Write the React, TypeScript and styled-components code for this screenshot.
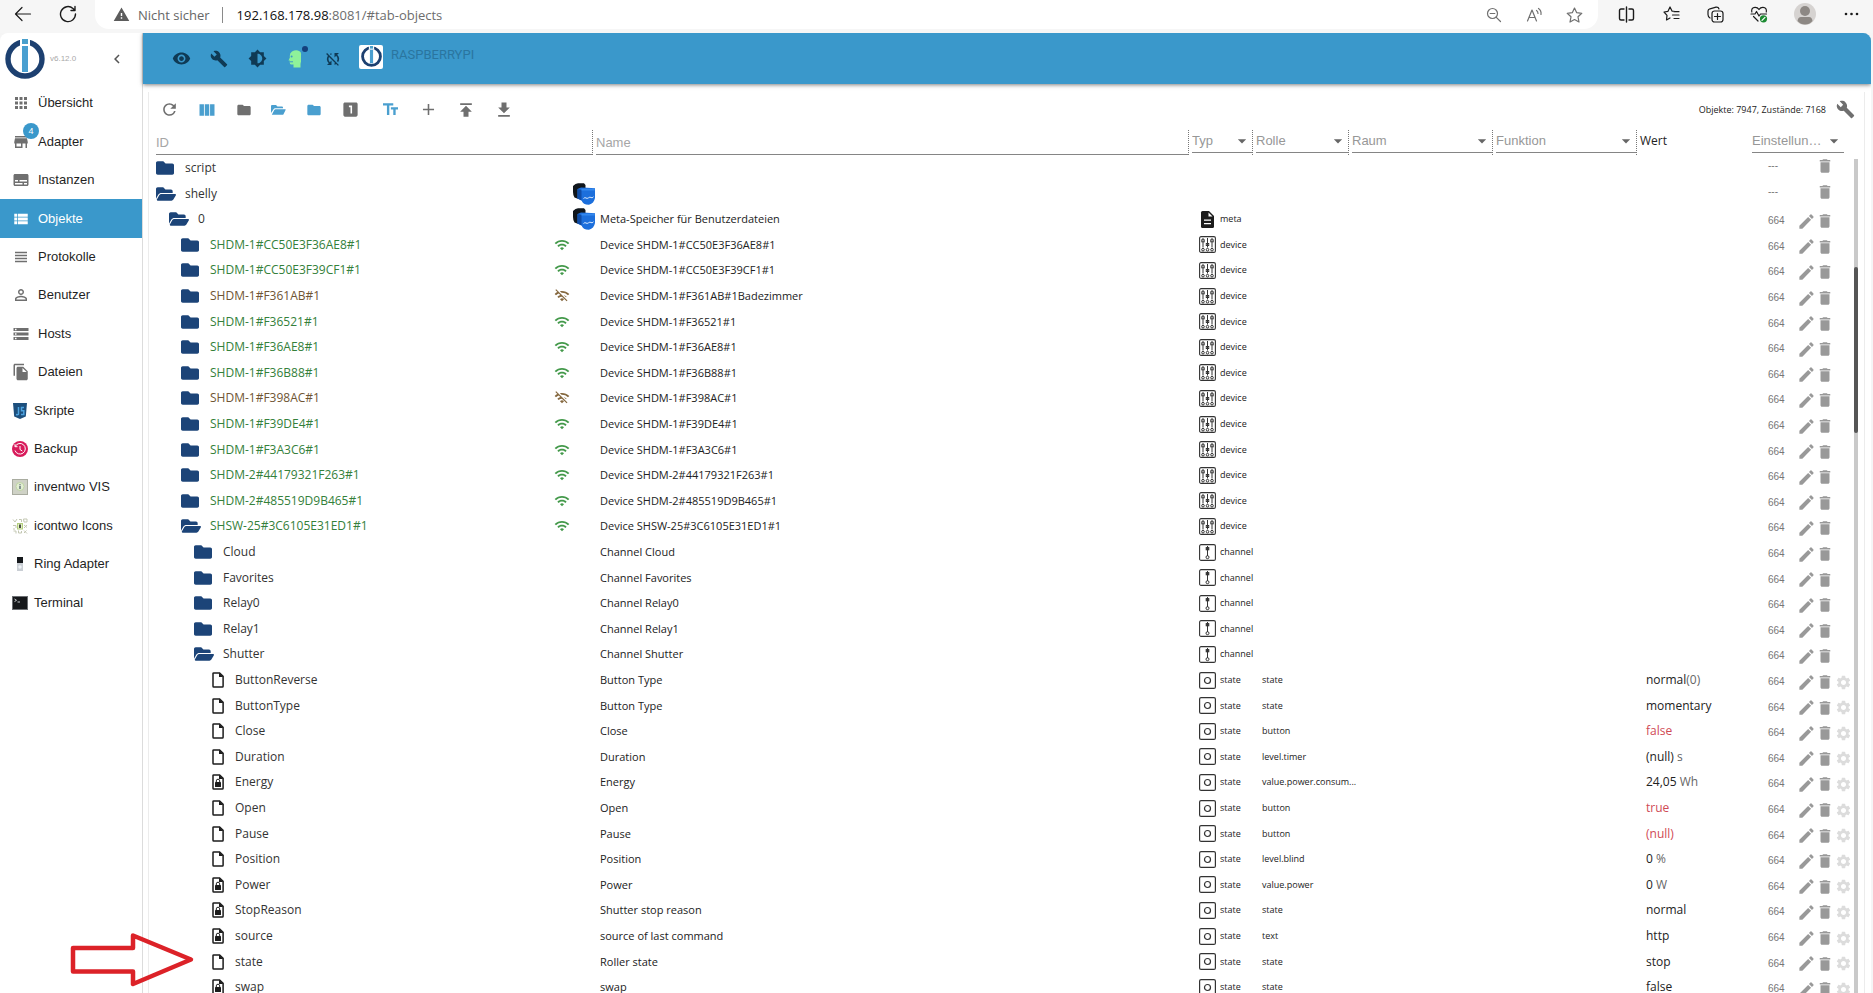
import React from 'react';
import styled, { createGlobalStyle } from 'styled-components';
import { FaFolder, FaFolderOpen } from 'react-icons/fa';
import {
  MdAdd, MdApps, MdArrowDropDown, MdBrightness6, MdBuild, MdChevronLeft, MdDelete, MdEdit, MdFileCopy,
  MdFolder, MdGetApp, MdLooksOne, MdPermIdentity, MdPublish, MdRefresh, MdSettings, MdStorage, MdStore,
  MdSubtitles, MdSyncDisabled, MdTextFields, MdViewColumn, MdViewHeadline, MdViewList, MdVisibility,
  MdWarning, MdWifi, MdWifiOff,
} from 'react-icons/md';

const ui = '"Open Sans", "Noto Sans", sans-serif';
const sans = '"Liberation Sans", Arial, sans-serif';
const blue = '#3a98cb';
const navy = '#1c4478';
const grey = '#6f6f6f';

const GlobalStyle = createGlobalStyle`
  *, *::before, *::after { box-sizing: border-box; }
  body { margin: 0; background: #f5f5f5; color: #222; font-family: ${ui}; }
  button, input, select { font: inherit; color: inherit; margin: 0; padding: 0; border: 0; background: none; border-radius: 0; outline: 0; }
  svg { display: block; flex: none; }
`;

const Page = styled.div`
  position: relative;
  display: flex;
  flex-direction: column;
  height: 100vh;
  overflow: hidden;
`;

/* Browser bar */
const BrowserBar = styled.header`
  display: flex;
  flex: none;
  height: 33px;
  padding: 0 5px 5px 5px;
  background: #f6f6f6;
`;
const BrowserButton = styled.button<{ $w: number; $soft?: boolean }>`
  display: flex;
  align-items: center;
  justify-content: center;
  width: ${p => p.$w}px;
  color: ${p => (p.$soft ? '#707070' : '#1b1b1b')};
`;
const AddressBox = styled.div`
  display: flex;
  flex: 1;
  align-items: center;
  height: 29px;
  padding: 0 4px 0 18px;
  background: #fff;
  border-radius: 0 0 14px 14px;
`;
const Insecure = styled.span`
  padding: 0 12px 0 8px;
  color: #666;
  font-size: 13px;
  line-height: 16px;
`;
const Divider = styled.span`
  width: 1px;
  height: 16px;
  background: #8a8a8a;
`;
const Url = styled.span`
  flex: 1;
  padding-left: 14px;
  color: #6d6d6d;
  font-size: 13px;
  line-height: 16px;
  b { font-weight: 400; color: #111; }
`;

/* Shell */
const Shell = styled.div`
  display: flex;
  flex: 1;
  min-height: 0;
  margin-right: 2px;
  background: #fff;
  border-radius: 8px 8px 0 0;
  overflow: hidden;
`;
const Sidebar = styled.nav`
  flex: none;
  width: 143px;
  border-right: 1px solid #dcdcdc;
`;
const Brand = styled.div`
  display: flex;
  align-items: center;
  height: 51px;
  padding: 0 16px 0 5px;
`;
const Version = styled.span`
  flex: 1;
  padding-left: 5px;
  color: #a9a9a9;
  font: 8px/12px ${sans};
`;
const Collapse = styled.button`
  color: #555;
`;
const Menu = styled.ul`
  margin: 0;
  padding: 0;
  list-style: none;
`;
const MenuItem = styled.li`
  height: 38px;
  &:nth-child(5n + 2), &:nth-child(5n + 4) { height: 39px; }
`;
const MenuLink = styled.a<{ $active?: boolean; $picture?: boolean }>`
  position: relative;
  display: flex;
  align-items: center;
  gap: ${p => (p.$picture ? 6 : 8)}px;
  height: 100%;
  padding-left: 12px;
  color: ${p => (p.$active ? '#fff' : '#1f1f1f')};
  background: ${p => (p.$active ? blue : 'transparent')};
  font: 13px/18px ${sans};
  text-decoration: none;
  svg { color: ${p => (p.$active ? '#fff' : grey)}; }
`;
const CountBadge = styled.span`
  position: absolute;
  left: 23px;
  top: 1px;
  width: 16px;
  height: 16px;
  border-radius: 50%;
  background: ${blue};
  color: #fff;
  font: 9px/16px ${sans};
  text-align: center;
`;

const Main = styled.main`
  display: flex;
  flex: 1;
  flex-direction: column;
  min-width: 0;
`;
const AppBar = styled.div`
  display: flex;
  flex: none;
  align-items: center;
  height: 51px;
  padding-left: 19px;
  background: ${blue};
  box-shadow: 0 1px 4px rgba(0, 0, 0, 0.5);
  color: #0f3a55;
`;
const BarButton = styled.button`
  position: relative;
  display: flex;
  align-items: center;
  justify-content: center;
  width: 38px;
  height: 38px;
`;
const Dot = styled.span`
  position: absolute;
  right: 6px;
  top: 6px;
  width: 6px;
  height: 6px;
  border-radius: 50%;
  background: #14407c;
`;
const HostLogo = styled.span`
  display: flex;
  align-items: center;
  justify-content: center;
  width: 24px;
  height: 24px;
  margin: 0 8px 4px 7px;
  border-radius: 2px;
  background: #fff;
`;
const HostName = styled.span`
  padding-bottom: 8px;
  color: #2a759f;
  font: 13px/16px Roboto, ${sans};
`;

const Panel = styled.section`
  display: flex;
  flex: 1;
  flex-direction: column;
  min-height: 0;
  margin: 8px 6px 0 5px;
  border: solid #ececec;
  border-width: 0 1px;
`;
const Toolbar = styled.div`
  display: flex;
  flex: none;
  align-items: center;
  height: 38px;
  padding: 0 0 3px 1px;
  color: ${grey};
`;
const ToolGroup = styled.div`
  display: flex;
  margin-right: 2px;
`;
const ToolButton = styled.button<{ $narrow?: boolean; $on?: boolean }>`
  display: flex;
  align-items: center;
  justify-content: center;
  width: ${p => (p.$narrow ? 35 : 38)}px;
  height: 34px;
  color: ${p => (p.$on ? '#4a9fcf' : grey)};
`;
const Counts = styled.span`
  margin-left: auto;
  color: #222;
  font-size: 9px;
  line-height: 14px;
`;

const Scroller = styled.div`
  display: flex;
  flex: 1;
  min-height: 0;
  padding: 0 6px 0 7px;
  overflow: hidden;
`;
const Track = styled.div`
  flex: none;
  width: 4px;
  margin: 29px 0 0 2px;
  background: #c9c9c9;
`;
const Thumb = styled.div`
  width: 4px;
  height: 166px;
  margin-top: 108px;
  border-radius: 2px;
  background: #555;
`;

/* Table */
const TableArea = styled.div`
  flex: 1;
  min-width: 0;
`;
const ObjectTable = styled.table`
  width: 100%;
  border-collapse: collapse;
  table-layout: fixed;
  td, th { padding: 0; }
`;
const HeadCell = styled.th`
  height: 25px;
  vertical-align: top;
  text-align: left;
  font-weight: 400;
`;
const HeadBox = styled.div<{ $grip?: boolean }>`
  display: flex;
  height: 25px;
  margin-right: ${p => (p.$grip ? 3 : 8)}px;
  border-right: ${p => (p.$grip ? '1px dotted #777' : '0')};
`;
const TextFilter = styled.input`
  width: 100%;
  height: 25px;
  border-bottom: 1px solid #858585;
  font: 13px/18px ${sans};
  &::placeholder { color: #a6a6a6; opacity: 1; }
`;
const SelectFilter = styled.label`
  display: flex;
  align-items: center;
  width: 100%;
  height: 23px;
  border-bottom: 1px solid #858585;
  color: #666;
`;
const Select = styled.select`
  flex: 1;
  min-width: 0;
  appearance: none;
  color: #979797;
  font: 13px/18px ${sans};
  text-overflow: ellipsis;
`;
const ValueTitle = styled.span`
  display: block;
  color: #222;
  font-size: 12px;
  line-height: 22px;
`;
const Row = styled.tr`
  height: 26px;
  &:nth-child(5n + 2), &:nth-child(5n + 4) { height: 25px; }
`;
const IdCell = styled.div<{ $indent: number; $tone?: string }>`
  display: flex;
  align-items: center;
  padding-left: ${p => p.$indent}px;
  color: ${p => p.$tone ?? '#333'};
  font-size: 12px;
  line-height: 18px;
`;
const IconSlot = styled.span<{ $centered?: boolean }>`
  display: flex;
  flex: none;
  justify-content: ${p => (p.$centered ? 'center' : 'flex-start')};
  width: 24px;
  margin-right: 5px;
  color: ${navy};
`;
const IdText = styled.span`
  flex: 1;
`;
const StatusSlot = styled.span`
  width: 19px;
`;
const LogoSlot = styled.span`
  width: 23px;
`;
const NameText = styled.span`
  display: block;
  padding-left: 4px;
  font-size: 11px;
  line-height: 18px;
  white-space: nowrap;
`;
const TypeBox = styled.span`
  display: flex;
  align-items: center;
  gap: 4px;
  padding-left: 7px;
  font-size: 9px;
  line-height: 16px;
`;
const RoleText = styled.span`
  display: block;
  padding-left: 6px;
  font-size: 9px;
  line-height: 16px;
  white-space: nowrap;
`;
const ValueText = styled.span<{ $alert?: boolean }>`
  display: block;
  padding-left: 6px;
  color: ${p => (p.$alert ? '#cf4a55' : '#222')};
  font-size: 12px;
  line-height: 18px;
  white-space: nowrap;
  small { font-size: 12px; color: #666; }
`;
const Actions = styled.div<{ $bare?: boolean }>`
  display: flex;
  align-items: center;
  height: 20px;
  margin-top: ${p => (p.$bare ? -4 : 4)}px;
  padding-left: 16px;
  color: #999;
`;
const Rights = styled.span`
  width: 28px;
  color: #777;
  font: 10px/14px ${sans};
`;
const ActionButton = styled.button<{ $faint?: boolean; $w: number }>`
  display: flex;
  justify-content: center;
  width: ${p => p.$w}px;
  color: ${p => (p.$faint ? '#dcdcdc' : 'inherit')};
`;
const EditSlot = styled.span`
  width: 20px;
`;

const Pointer = styled.svg`
  position: absolute;
  left: 70px;
  top: 930px;
`;

/* Drawings */
const Logo = ({ size }: { size: number }) => (
  <svg width={size} height={size} viewBox="0 0 40 40">
    <circle cx="20" cy="20" r="17" fill="none" stroke="#1d4070" strokeWidth="5.4" />
    <rect x="15" y="0" width="10" height="7" fill="#fff" />
    <rect x="17" y="0" width="6" height="5" fill="#4aa0cc" />
    <rect x="17" y="7" width="6" height="26" fill="#4a9fd0" />
  </svg>
);
const FileIcon = ({ locked }: { locked?: boolean }) => (
  <svg width="12" height="16" viewBox="0 0 12 16">
    <path d="M1 1.6Q1 .9 1.7.9H7.6L11.1 4.4V14.3Q11.1 15.1 10.3 15.1H1.8Q1 15.1 1 14.3Z" fill="none" stroke="#1c1c1c" strokeWidth="1.5" />
    <path d="M7 .8V5H11.2Z" fill="#1c1c1c" />
    {locked && (
      <g>
        <rect x="3" y="8" width="6" height="5" rx=".6" fill="#1c1c1c" />
        <path d="M4.3 8V6.9a1.7 1.7 0 0 1 3.4 0V8" fill="none" stroke="#1c1c1c" strokeWidth="1" />
      </g>
    )}
  </svg>
);
const MetaIcon = () => (
  <svg width="17" height="17" viewBox="0 0 17 17">
    <path d="M3.500 0H10L15 5V15.500Q15 17 13.500 17H3.500Q2 17 2 15.500V1.500Q2 0 3.500 0Z" fill="#1c1c1c" />
    <path d="M9.500 1.500V5.500H13.500ZM5 8.500H12V9.700H5ZM5 12H12V13.200H5Z" fill="#fff" />
  </svg>
);
const DeviceIcon = () => (
  <svg width="17" height="17" viewBox="0 0 17 17" fill="none" stroke="#333">
    <rect x=".6" y=".6" width="15.800" height="15.800" rx="1.500" strokeWidth="1.100" />
    <path d="M4 2V11.500M8.500 2V11.500M13 2V11.500" />
    <rect x="2.800" y="3.800" width="2.400" height="2" fill="#fff" />
    <rect x="7.300" y="7.500" width="2.400" height="2" fill="#333" />
    <rect x="11.800" y="3.800" width="2.400" height="2" fill="#fff" />
    <circle cx="4" cy="13.700" r="1.300" /><circle cx="8.500" cy="13.700" r="1.300" /><circle cx="13" cy="13.700" r="1.300" />
  </svg>
);
const ChannelIcon = () => (
  <svg width="17" height="17" viewBox="0 0 17 17" fill="none" stroke="#333">
    <rect x=".6" y=".6" width="15.800" height="15.800" rx="1.500" strokeWidth="1.100" />
    <path d="M8.500 2V12" />
    <rect x="7.200" y="3.600" width="2.600" height="2.200" fill="#333" />
    <circle cx="8.500" cy="13.200" r="1.500" />
  </svg>
);
const StateIcon = () => (
  <svg width="17" height="17" viewBox="0 0 17 17" fill="none" stroke="#333">
    <rect x=".6" y=".6" width="15.800" height="15.800" rx="1.500" strokeWidth="1.200" />
    <circle cx="8.500" cy="8.500" r="3" strokeWidth="1.200" />
  </svg>
);
const ShellyLogo = () => (
  <svg width="22" height="22" viewBox="0 0 22 22">
    <path d="M0 3 2.500 1 5 .3 11 .2 12.500 2V6L6 9 5.500 16 1.500 14.500Q0 12.500 0 9Z" fill="#10161c" />
    <path d="M4.500 6 8 4.500 14 4.800 22 5.300V15Q21 20.500 16 21.700 10 21.800 8.500 17.500L4.500 15.500Z" fill="#1c6fdc" />
    <path d="M4.500 6 8.500 7V17.500L4.500 15.500Z" fill="#0f4da8" />
    <path d="M8.500 5.800H21.800V7.500H8.500Z" fill="#3489ee" />
    <path d="M10.500 15.500Q12 14 13 15T15.500 14.800 18 14.500 20.500 13.800" fill="none" stroke="#d8e9ff" strokeWidth="1" />
  </svg>
);
const HeadIcon = () => (
  <svg width="14" height="18" viewBox="0 0 14 18">
    <path d="M4 1.500Q8-.6 11.500 1.200 13.500 2.200 13 5V11.500L12.500 14V17.500H5.500V14.500H3Q1.800 14.500 1.800 12.800V10.500H.5L1.900 7.500Q1.300 3 4 1.500Z" fill="#8ef29a" />
    <circle cx="3.600" cy="6.500" r="1" fill={blue} /><path d="M2 11.800H5" stroke={blue} />
  </svg>
);
const FolderOpenIcon = () => (
  <svg width="15" height="12" viewBox="0 0 15 12" fill="currentColor">
    <path d="M0 9V2Q0 1 1 1H5L6.500 2.500H11Q12 2.500 12 3.500V4.200H4Q3.200 4.200 2.700 5Z" />
    <path d="M.8 10.800 3.300 6Q3.700 5.300 4.500 5.300H14.200Q15 5.300 14.600 6L12.500 10.200Q12.200 10.800 11.500 10.800Z" />
  </svg>
);

const line = { fill: 'none', stroke: 'currentColor', strokeWidth: 1.2, strokeLinecap: 'round', strokeLinejoin: 'round' } as const;
const star = 'M8.500 1 10.700 5.700 15.800 6.300 12 9.800 13 15 8.500 12.500 4 15 5 9.800 1.200 6.300 6.300 5.700Z';
const BackArrow = () => <svg width="18" height="16" viewBox="0 0 18 16" {...line}><path d="M8 1.500 1.500 8 8 14.500M1.500 8H16.500" /></svg>;
const Reload = () => <svg width="18" height="18" viewBox="0 0 18 18" {...line} strokeWidth={1.400}><path d="M16.500 9A7.500 7.500 0 1 1 14 3.500L16 5.500M16 1.500V5.500H12" /></svg>;
const ZoomOut = () => <svg width="16" height="16" viewBox="0 0 16 16" {...line}><circle cx="6.500" cy="6.500" r="5" /><path d="M4.200 6.500H8.800M10.300 10.300 14.500 14.500" /></svg>;
const ReadAloud = () => <svg width="17" height="16" viewBox="0 0 17 16" {...line}><path d="M1.500 14 6 3 10.500 14M3 10.500H9M10.500 3.500Q12 4.500 12 6.500M12.500 1.500Q15.500 3.500 15 7.500" /></svg>;
const Star = () => <svg width="17" height="16" viewBox="0 0 17 16" {...line}><path d={star} /></svg>;
const Split = () => <svg width="17" height="17" viewBox="0 0 17 17" {...line} strokeWidth={1.400}><path d="M6 3H3Q1.500 3 1.500 4.500V12.500Q1.500 14 3 14H6M8.500 1V16M11 3H14Q15.500 3 15.500 4.500V12.500Q15.500 14 14 14H11" /></svg>;
const Favourites = () => <svg width="17" height="16" viewBox="0 0 17 16" {...line}><path d="M9 5 7 1 5 5.300 1 6 4 9.300 3.500 14 7 12M9 5 12 5.500M11 5.700H16M9.500 9H16M11 12.500H16" /></svg>;
const Collections = () => <svg width="17" height="17" viewBox="0 0 17 17" {...line}><rect x="5" y="5" width="11" height="11" rx="2.500" /><path d="M10.500 7.500V13.500M7.500 10.500H13.500M3 12Q1 11 1 8.500V5Q1 3.500 3 2.800L9 1.100Q11.500.8 12 3" /></svg>;
const Health = () => (
  <svg width="18" height="17" viewBox="0 0 18 17" {...line}>
    <path d="M1.800 6Q1 1.500 5 1.300 7.500 1.200 9 3.500 10.500 1.200 13 1.300 17 1.500 16.300 6M1 8H5L6.500 5.500 9 10 10.500 8H16.500M3.500 10.500 8 15" />
    <circle cx="13.500" cy="12.800" r="3.600" fill="#1c8a32" stroke="none" />
    <path d="M12 14.300 15 11.300" stroke="#fff" />
  </svg>
);
const Avatar = () => (
  <svg width="22" height="22" viewBox="0 0 22 22">
    <circle cx="11" cy="11" r="11" fill="#d6d3d1" />
    <circle cx="11" cy="8" r="5" fill="#8d8884" />
    <path d="M3.500 18Q4 14 7 14H15Q18 14 18.500 18 15.500 21.500 11 21.500T3.500 18Z" fill="#8d8884" />
  </svg>
);
const Dots = () => <svg width="15" height="4" viewBox="0 0 15 4" fill="currentColor"><circle cx="2" cy="2" r="1.300" /><circle cx="7.500" cy="2" r="1.300" /><circle cx="13" cy="2" r="1.300" /></svg>;

const ScriptLogo = () => (
  <svg width="16" height="16" viewBox="0 0 16 16">
    <path d="M1 0H15L13.800 13.500 8 16 2.200 13.500Z" fill="#1d4f7d" />
    <path d="M6.500 4V11Q6.500 12 4 11.500M12 4.500H9.500V7.800H11.800V11.500H9" fill="none" stroke="#4da3e0" strokeWidth="1.500" />
  </svg>
);
const BackupLogo = () => (
  <svg width="16" height="16" viewBox="0 0 16 16" fill="none" stroke="#fff">
    <circle cx="8" cy="8" r="8" fill="#d81b5b" stroke="none" />
    <path d="M3.200 5.500A5.300 5.300 0 1 1 3 9.500M3 3.200V5.700H5.500M8 5V8.500L10.300 10" />
  </svg>
);
const InventwoLogo = () => (
  <svg width="16" height="16" viewBox="0 0 16 16">
    <rect x=".5" y=".5" width="15" height="15" fill="#cfd2c6" stroke="#a9aca0" />
    <circle cx="8" cy="7.500" r="4" fill="#e2eed2" stroke="#b8d09a" strokeWidth=".8" />
    <path d="M8 5.200V6.200M8 7V10" stroke="#456" strokeWidth="1.200" />
  </svg>
);
const IcontwoLogo = () => (
  <svg width="16" height="16" viewBox="0 0 16 16" fill="none" stroke="#c3c7b2">
    <path d="M1 1.500 3 4 5 1M7 1.500H9.500V4M11.500 1H15V4H12ZM1 7.500H4V10M1 11H3M12 7 15 9.500M12 10 15 7M1.500 13H4V15.500M6.500 12.500V15H9.500V13M12 12.500 15 15.500M12 15 14.500 12.500" />
    <rect x="5.500" y="5.500" width="5" height="5.500" fill="#e3f0c8" stroke="#b4cf7e" />
    <path d="M8 6.500V10" stroke="#222" strokeWidth="1.600" />
  </svg>
);
const RingLogo = () => (
  <svg width="16" height="16" viewBox="0 0 16 16">
    <rect x="5" y="1" width="6" height="6" fill="#15181c" />
    <rect x="5" y="7" width="6" height="8" fill="#c9ced4" />
    <circle cx="8" cy="11" r="1.700" fill="#eef2f6" />
  </svg>
);
const TerminalLogo = () => (
  <svg width="16" height="16" viewBox="0 0 16 16">
    <rect x=".5" y="1.500" width="15" height="13" fill="#15171a" stroke="#6c6f73" />
    <path d="M2.500 4 4.500 5.300 2.500 6.600M5.500 7H8" fill="none" stroke="#dfe3e6" strokeWidth=".9" />
  </svg>
);

/* Data */
type Entry = { label: string; icon: React.ReactNode; active?: boolean; picture?: boolean; count?: number };
const menu: Entry[] = [
  { label: 'Übersicht', icon: <MdApps size={18} /> },
  { label: 'Adapter', icon: <MdStore size={18} />, count: 4 },
  { label: 'Instanzen', icon: <MdSubtitles size={18} /> },
  { label: 'Objekte', icon: <MdViewList size={18} />, active: true },
  { label: 'Protokolle', icon: <MdViewHeadline size={18} /> },
  { label: 'Benutzer', icon: <MdPermIdentity size={18} /> },
  { label: 'Hosts', icon: <MdStorage size={18} /> },
  { label: 'Dateien', icon: <MdFileCopy size={18} /> },
  { label: 'Skripte', icon: <ScriptLogo />, picture: true },
  { label: 'Backup', icon: <BackupLogo />, picture: true },
  { label: 'inventwo VIS', icon: <InventwoLogo />, picture: true },
  { label: 'icontwo Icons', icon: <IcontwoLogo />, picture: true },
  { label: 'Ring Adapter', icon: <RingLogo />, picture: true },
  { label: 'Terminal', icon: <TerminalLogo />, picture: true },
];

type Kind = 'meta' | 'device' | 'channel' | 'state';
type Item = {
  id: string; level: number; open?: boolean; file?: boolean; locked?: boolean; online?: boolean; logo?: boolean;
  name?: string; type?: Kind; role?: string; value?: string; unit?: string; alert?: boolean;
};
const device = (id: string, online = true, extra = '', open = false): Item => ({ id, level: 2, open, online, name: `Device ${id}${extra}`, type: 'device' });
const channel = (id: string, open = false): Item => ({ id, level: 3, open, name: `Channel ${id}`, type: 'channel' });
const state = (id: string, name: string, role: string, value: string, more: Partial<Item> = {}): Item => ({ id, level: 4, file: true, name, type: 'state', role, value, ...more });

const items: Item[] = [
  { id: 'script', level: 0 },
  { id: 'shelly', level: 0, open: true, logo: true },
  { id: '0', level: 1, open: true, logo: true, name: 'Meta-Speicher für Benutzerdateien', type: 'meta' },
  device('SHDM-1#CC50E3F36AE8#1'),
  device('SHDM-1#CC50E3F39CF1#1'),
  device('SHDM-1#F361AB#1', false, 'Badezimmer'),
  device('SHDM-1#F36521#1'),
  device('SHDM-1#F36AE8#1'),
  device('SHDM-1#F36B88#1'),
  device('SHDM-1#F398AC#1', false),
  device('SHDM-1#F39DE4#1'),
  device('SHDM-1#F3A3C6#1'),
  device('SHDM-2#44179321F263#1'),
  device('SHDM-2#485519D9B465#1'),
  device('SHSW-25#3C6105E31ED1#1', true, '', true),
  channel('Cloud'),
  channel('Favorites'),
  channel('Relay0'),
  channel('Relay1'),
  channel('Shutter', true),
  state('ButtonReverse', 'Button Type', 'state', 'normal', { unit: '(0)' }),
  state('ButtonType', 'Button Type', 'state', 'momentary'),
  state('Close', 'Close', 'button', 'false', { alert: true }),
  state('Duration', 'Duration', 'level.timer', '(null)', { unit: ' s' }),
  state('Energy', 'Energy', 'value.power.consum...', '24,05', { unit: ' Wh', locked: true }),
  state('Open', 'Open', 'button', 'true', { alert: true }),
  state('Pause', 'Pause', 'button', '(null)', { alert: true }),
  state('Position', 'Position', 'level.blind', '0', { unit: ' %' }),
  state('Power', 'Power', 'value.power', '0', { unit: ' W', locked: true }),
  state('StopReason', 'Shutter stop reason', 'state', 'normal', { locked: true }),
  state('source', 'source of last command', 'text', 'http', { locked: true }),
  state('state', 'Roller state', 'state', 'stop'),
  state('swap', 'swap', 'state', 'false', { locked: true }),
];
const indents = [0, 13, 25, 38, 50];
const typeIcons: Record<Kind, React.ReactNode> = { meta: <MetaIcon />, device: <DeviceIcon />, channel: <ChannelIcon />, state: <StateIcon /> };

const ObjectRow = ({ item }: { item: Item }) => (
  <Row>
    <td>
      <IdCell $indent={indents[item.level]} $tone={item.online === undefined ? undefined : item.online ? '#34803a' : '#6f5534'}>
        <IconSlot $centered={item.file}>
          {item.file ? <FileIcon locked={item.locked} /> : item.open ? <FaFolderOpen size={20} /> : <FaFolder size={18} />}
        </IconSlot>
        <IdText>{item.id}</IdText>
        <StatusSlot>
          {item.online === true && <MdWifi size={16} color="#43994a" />}
          {item.online === false && <MdWifiOff size={16} color="#85683f" />}
        </StatusSlot>
        <LogoSlot>{item.logo && <ShellyLogo />}</LogoSlot>
      </IdCell>
    </td>
    <td><NameText>{item.name}</NameText></td>
    <td>{item.type && <TypeBox>{typeIcons[item.type]}{item.type}</TypeBox>}</td>
    <td><RoleText>{item.role}</RoleText></td>
    <td />
    <td />
    <td><ValueText $alert={item.alert}>{item.value}<small>{item.unit}</small></ValueText></td>
    <td>
      <Actions $bare={!item.type}>
        <Rights>{item.type ? '664' : '---'}</Rights>
        {item.type ? <ActionButton $w={20} aria-label="Bearbeiten"><MdEdit size={19} /></ActionButton> : <EditSlot />}
        <ActionButton $w={18} aria-label="Löschen"><MdDelete size={18} /></ActionButton>
        {item.file && <ActionButton $w={18} $faint aria-label="Einstellungen"><MdSettings size={17} /></ActionButton>}
      </Actions>
    </td>
  </Row>
);

const Filter = ({ label, grip = true }: { label: string; grip?: boolean }) => (
  <HeadBox $grip={grip}>
    <SelectFilter>
      <Select aria-label={label} defaultValue=""><option value="">{label}</option></Select>
      <MdArrowDropDown size={20} />
    </SelectFilter>
  </HeadBox>
);

export default function App() {
  return (
    <Page>
      <GlobalStyle />
      <BrowserBar>
        <BrowserButton $w={36} aria-label="Zurück"><BackArrow /></BrowserButton>
        <BrowserButton $w={54} aria-label="Neu laden"><Reload /></BrowserButton>
        <AddressBox>
          <MdWarning size={17} color="#5c5c5c" />
          <Insecure>Nicht sicher</Insecure>
          <Divider />
          <Url><b>192.168.178.98</b>:8081/#tab-objects</Url>
          <BrowserButton $w={40} $soft aria-label="Verkleinern"><ZoomOut /></BrowserButton>
          <BrowserButton $w={40} $soft aria-label="Vorlesen"><ReadAloud /></BrowserButton>
          <BrowserButton $w={40} $soft aria-label="Favorit"><Star /></BrowserButton>
        </AddressBox>
        <BrowserButton $w={56} aria-label="Geteilter Bildschirm"><Split /></BrowserButton>
        <BrowserButton $w={34} aria-label="Favoriten"><Favourites /></BrowserButton>
        <BrowserButton $w={54} aria-label="Sammlungen"><Collections /></BrowserButton>
        <BrowserButton $w={34} aria-label="Leistung"><Health /></BrowserButton>
        <BrowserButton $w={58} aria-label="Profil"><Avatar /></BrowserButton>
        <BrowserButton $w={34} aria-label="Mehr"><Dots /></BrowserButton>
      </BrowserBar>
      <Shell>
        <Sidebar>
          <Brand>
            <Logo size={40} />
            <Version>v6.12.0</Version>
            <Collapse aria-label="Einklappen"><MdChevronLeft size={18} /></Collapse>
          </Brand>
          <Menu>
            {menu.map(m => (
              <MenuItem key={m.label}>
                <MenuLink href="#" $active={m.active} $picture={m.picture}>
                  {m.icon}{m.label}
                  {m.count && <CountBadge>{m.count}</CountBadge>}
                </MenuLink>
              </MenuItem>
            ))}
          </Menu>
        </Sidebar>
        <Main>
          <AppBar>
            <BarButton aria-label="Ansicht"><MdVisibility size={19} /></BarButton>
            <BarButton aria-label="Werkzeuge"><MdBuild size={18} /></BarButton>
            <BarButton aria-label="Farbschema"><MdBrightness6 size={19} /></BarButton>
            <BarButton aria-label="Expertenmodus"><HeadIcon /><Dot /></BarButton>
            <BarButton aria-label="Synchronisierung"><MdSyncDisabled size={18} /></BarButton>
            <HostLogo><Logo size={21} /></HostLogo>
            <HostName>RASPBERRYPI</HostName>
          </AppBar>
          <Panel>
            <Toolbar>
              <ToolGroup>
                <ToolButton aria-label="Aktualisieren"><MdRefresh size={19} /></ToolButton>
                <ToolButton $on aria-label="Spalten"><MdViewColumn size={20} /></ToolButton>
                <ToolButton $narrow aria-label="Alle schließen"><MdFolder size={16} /></ToolButton>
                <ToolButton $narrow $on aria-label="Alle öffnen"><FolderOpenIcon /></ToolButton>
                <ToolButton $narrow $on aria-label="Ebene"><MdFolder size={16} /></ToolButton>
                <ToolButton aria-label="Ebene eins"><MdLooksOne size={19} /></ToolButton>
              </ToolGroup>
              <ToolGroup>
                <ToolButton $on aria-label="Namen"><MdTextFields size={19} /></ToolButton>
                <ToolButton aria-label="Hinzufügen"><MdAdd size={19} /></ToolButton>
                <ToolButton aria-label="Hochladen"><MdPublish size={20} /></ToolButton>
                <ToolButton aria-label="Herunterladen"><MdGetApp size={20} /></ToolButton>
              </ToolGroup>
              <Counts>Objekte: 7947, Zustände: 7168</Counts>
              <ToolButton aria-label="Konfiguration"><MdBuild size={19} /></ToolButton>
            </Toolbar>
            <Scroller>
              <TableArea>
                <ObjectTable>
                  <colgroup>
                    <col style={{ width: 440 }} /><col /><col style={{ width: 64 }} /><col style={{ width: 96 }} />
                    <col style={{ width: 144 }} /><col style={{ width: 144 }} /><col style={{ width: 112 }} /><col style={{ width: 100 }} />
                  </colgroup>
                  <thead>
                    <tr>
                      <HeadCell><HeadBox $grip><TextFilter aria-label="ID" placeholder="ID" /></HeadBox></HeadCell>
                      <HeadCell><HeadBox $grip><TextFilter aria-label="Name" placeholder="Name" /></HeadBox></HeadCell>
                      <HeadCell><Filter label="Typ" /></HeadCell>
                      <HeadCell><Filter label="Rolle" /></HeadCell>
                      <HeadCell><Filter label="Raum" /></HeadCell>
                      <HeadCell><Filter label="Funktion" /></HeadCell>
                      <HeadCell><ValueTitle>Wert</ValueTitle></HeadCell>
                      <HeadCell><Filter label="Einstellungen" grip={false} /></HeadCell>
                    </tr>
                  </thead>
                  <tbody>{items.map(item => <ObjectRow key={`${item.level}-${item.id}`} item={item} />)}</tbody>
                </ObjectTable>
              </TableArea>
              <Track><Thumb /></Track>
            </Scroller>
          </Panel>
        </Main>
      </Shell>
      <Pointer width="126" height="60" viewBox="0 0 126 60">
        <path d="M3 18H63V5.500L121 29.500 63 54V41.500H3Z" fill="none" stroke="#dc2228" strokeWidth="4.500" strokeLinejoin="round" />
      </Pointer>
    </Page>
  );
}
